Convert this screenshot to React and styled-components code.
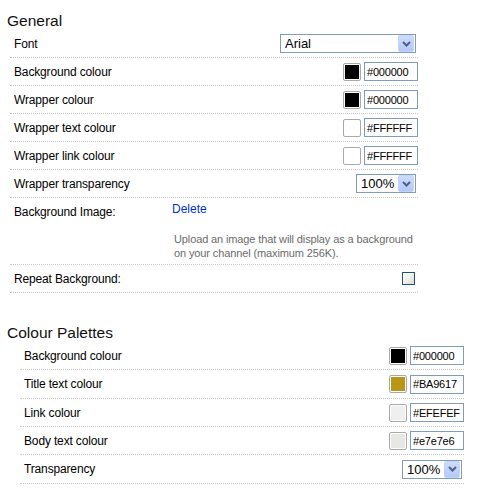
import React from "react";
import styled, { createGlobalStyle } from "styled-components";

const Global = createGlobalStyle`
  html, body { margin: 0; padding: 0; background: #ffffff; }
  body { font-family: "Liberation Sans", Arial, sans-serif; color: #000; }
`;

const Page = styled.div`
  padding: 12px 0 0 7px;
`;

const Section = styled.section`
  margin-top: ${(p) => p.$top || 0}px;
`;

const Heading = styled.h2`
  margin: 0;
  font-size: 15.5px;
  line-height: 18px;
  font-weight: normal;
  color: #111;
`;

const Rows = styled.div`
  margin-left: ${(p) => p.$indent}px;
  width: ${(p) => p.$width}px;
  display: flex;
  flex-direction: column;
`;

const Row = styled.div`
  display: flex;
  align-items: center;
  justify-content: space-between;
  height: ${(p) => p.$h || 27}px;
  padding-left: 4px;
  border-bottom: 1px dotted #c8c8c8;
`;

const Label = styled.span`
  font-size: 12px;
  line-height: 14px;
  letter-spacing: -0.15px;
`;

const TallRow = styled.div`
  display: grid;
  grid-template-columns: 158px 1fr;
  padding: 4px 0 4px 4px;
  border-bottom: 1px dotted #c8c8c8;
`;

const TallLabel = styled(Label)`
  padding-top: 3px;
`;

const LinkText = styled.a`
  display: block;
  font-size: 12px;
  line-height: 14px;
  color: #0033cc;
  text-decoration: none;
`;

const Help = styled.p`
  margin: 16px 0 0 2px;
  font-size: 11px;
  line-height: 14px;
  letter-spacing: -0.12px;
  white-space: nowrap;
  color: #6b6b6b;
`;

const ColourGroup = styled.div`
  display: flex;
  align-items: center;
  gap: 3px;
`;

const Swatch = styled.span`
  box-sizing: border-box;
  width: 18px;
  height: 18px;
  border: 1px solid #a9a9a9;
  border-radius: 2px;
  padding: 1px;
  background: #fff;
  display: flex;
`;

const SwatchFill = styled.span`
  flex: 1;
  background: ${(p) => p.$color};
`;

const HexInput = styled.input`
  box-sizing: border-box;
  width: 54px;
  height: 19px;
  border: 1px solid #7f9db9;
  padding: 0 0 0 2px;
  margin: 0;
  font-family: "Liberation Sans", Arial, sans-serif;
  font-size: 11px;
  letter-spacing: -0.2px;
  color: #000;
  background: #fff;
  outline: none;
`;

const SelectBox = styled.div`
  box-sizing: border-box;
  width: ${(p) => p.$width}px;
  height: 19px;
  margin-right: 2px;
  border: 1px solid #7f9db9;
  padding: 0 1px 0 4px;
  display: flex;
  align-items: center;
  justify-content: space-between;
  background: #fff;
`;

const SelectText = styled.span`
  font-size: 13px;
  line-height: 15px;
`;

const ArrowButton = styled.span`
  box-sizing: border-box;
  width: 16px;
  height: 17px;
  border: 1px solid #c3d3fd;
  border-radius: 2px;
  background: linear-gradient(180deg, #cddbfd 0%, #b4c9f8 100%);
  display: flex;
  align-items: center;
  justify-content: center;
`;

const Check = styled.span`
  box-sizing: border-box;
  width: 13px;
  height: 13px;
  margin-right: 3px;
  border: 1px solid #1c5180;
  background: linear-gradient(135deg, #ffffff 0%, #f0f0ea 50%, #dcdcd7 100%);
`;

const Chevron = () => (
  <svg width="9" height="6" viewBox="0 0 9 6">
    <path d="M1 1 L4.5 4.5 L8 1" fill="none" stroke="#4d6185" strokeWidth="2" />
  </svg>
);

const Select = ({ value, width }) => (
  <SelectBox $width={width}>
    <SelectText>{value}</SelectText>
    <ArrowButton>
      <Chevron />
    </ArrowButton>
  </SelectBox>
);

const Colour = ({ swatch, hex }) => (
  <ColourGroup>
    <Swatch>
      <SwatchFill $color={swatch} />
    </Swatch>
    <HexInput defaultValue={hex} readOnly />
  </ColourGroup>
);

export default function App() {
  return (
    <>
      <Global />
      <Page>
        <Section>
          <Heading>General</Heading>
          <Rows $indent={3} $width={408}>
            <Row>
              <Label>Font</Label>
              <Select value="Arial" width={136} />
            </Row>
            <Row>
              <Label>Background colour</Label>
              <Colour swatch="#000000" hex="#000000" />
            </Row>
            <Row>
              <Label>Wrapper colour</Label>
              <Colour swatch="#000000" hex="#000000" />
            </Row>
            <Row>
              <Label>Wrapper text colour</Label>
              <Colour swatch="#ffffff" hex="#FFFFFF" />
            </Row>
            <Row>
              <Label>Wrapper link colour</Label>
              <Colour swatch="#ffffff" hex="#FFFFFF" />
            </Row>
            <Row>
              <Label>Wrapper transparency</Label>
              <Select value="100%" width={60} />
            </Row>
            <TallRow>
              <TallLabel>Background Image:</TallLabel>
              <div>
                <LinkText href="#">Delete</LinkText>
                <Help>
                  Upload an image that will display as a background
                  <br />
                  on your channel (maximum 256K).
                </Help>
              </div>
            </TallRow>
            <Row>
              <Label>Repeat Background:</Label>
              <Check />
            </Row>
          </Rows>
        </Section>
        <Section $top={31}>
          <Heading>Colour Palettes</Heading>
          <Rows $indent={13} $width={444}>
            <Row>
              <Label>Background colour</Label>
              <Colour swatch="#000000" hex="#000000" />
            </Row>
            <Row $h={28}>
              <Label>Title text colour</Label>
              <Colour swatch="#BA9617" hex="#BA9617" />
            </Row>
            <Row>
              <Label>Link colour</Label>
              <Colour swatch="#EFEFEF" hex="#EFEFEF" />
            </Row>
            <Row>
              <Label>Body text colour</Label>
              <Colour swatch="#e7e7e6" hex="#e7e7e6" />
            </Row>
            <Row $h={28}>
              <Label>Transparency</Label>
              <Select value="100%" width={60} />
            </Row>
          </Rows>
        </Section>
      </Page>
    </>
  );
}
